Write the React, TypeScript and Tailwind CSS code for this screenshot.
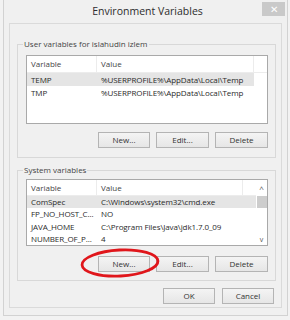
import React from "react";

type Row = { name: string; value: string; selected?: boolean };

const userVars: Row[] = [
  { name: "TEMP", value: "%USERPROFILE%\\AppData\\Local\\Temp", selected: true },
  { name: "TMP", value: "%USERPROFILE%\\AppData\\Local\\Temp" },
];

const systemVars: Row[] = [
  { name: "ComSpec", value: "C:\\Windows\\system32\\cmd.exe", selected: true },
  { name: "FP_NO_HOST_C...", value: "NO" },
  { name: "JAVA_HOME", value: "C:\\Program Files\\Java\\jdk1.7.0_09" },
  { name: "NUMBER_OF_P...", value: "4" },
];

function Button({ label, width }: { label: string; width: string }) {
  return (
    <div
      className={`${width} h-[16px] flex items-center justify-center border border-[#b4b4b4] bg-gradient-to-b from-[#f4f4f4] to-[#e6e6e6] text-[8px] text-[#333]`}
    >
      {label}
    </div>
  );
}

function VarList({ rows, scroll, height }: { rows: Row[]; scroll?: boolean; height: string }) {
  return (
    <div className={`ml-[8px] w-[242px] ${height} border border-[#a9a9a9] bg-white flex overflow-hidden`}>
      <div className="flex-1 flex flex-col">
        <div className="h-[17px] flex items-center border-b border-[#ececec] text-[8px] text-[#444]">
          <div className="w-[70px] h-full flex items-center pl-[4px] border-r border-[#ececec]">Variable</div>
          <div className="flex-1 h-full flex items-center pl-[4px] border-r border-[#ececec]">Value</div>
          <div className="w-[13px]" />
        </div>
        {rows.map((r) => (
          <div
            key={r.name}
            className={`h-[13px] flex items-center text-[8px] tracking-[-0.1px] text-[#2a2a2a] ${r.selected ? "bg-[#e5e5e5]" : ""} ${scroll ? "" : "mr-[13px]"}`}
          >
            <div className="w-[70px] pl-[4px] whitespace-nowrap">{r.name}</div>
            <div className="flex-1 pl-[4px] whitespace-nowrap">{r.value}</div>
          </div>
        ))}
      </div>
      {scroll && (
        <div className="w-[11px] flex flex-col items-center bg-white">
          <div className="h-[13px] mt-[2px] flex items-center justify-center text-[8px] text-[#555] leading-none">^</div>
          <div className="w-[10px] h-[12px] mt-[1px] bg-[#cdcdcd]" />
          <div className="flex-1" />
          <div className="h-[12px] flex items-center justify-center text-[7px] text-[#555] leading-none">v</div>
        </div>
      )}
    </div>
  );
}

export default function App() {
  return (
    <div
      className="relative w-[290px] h-[320px] bg-[#f2f2f2] overflow-hidden"
      style={{ fontFamily: '"Open Sans", "Noto Sans", sans-serif' }}
    >
      <div className="ml-[3px] w-[285px] h-[316px] border-x border-b border-[#d2d2d2] bg-[#f0f0f0] flex flex-col">
        {/* title bar */}
        <div className="relative h-[23px] flex items-center justify-center">
          <span className="text-[10.5px] text-[#2d2d2d] pl-[4px]">Environment Variables</span>
          <div className="absolute right-[2px] top-[2px] w-[23px] h-[14px] bg-[#c9c9c9] flex items-center justify-center text-white text-[10px] leading-none">
            ✕
          </div>
        </div>

        {/* client area */}
        <div className="mx-[5px] h-[285px] border border-[#dadada] bg-[#f0f0f0] flex flex-col">
          <fieldset className="ml-[7px] mt-[15px] w-[259px] border border-[#d8d8d8] pt-[6px] pb-[9px]">
            <legend className="ml-[5px] px-[1px] text-[8px] text-[#444] leading-[10px]">User variables for islahudin izlem</legend>
            <VarList rows={userVars} height="h-[69px]" />
            <div className="ml-[8px] w-[242px] mt-[8px] flex justify-end gap-[6px]">
              <Button label="New..." width="w-[52px]" />
              <Button label="Edit..." width="w-[53px]" />
              <Button label="Delete" width="w-[53px]" />
            </div>
          </fieldset>

          <fieldset className="ml-[7px] mt-[7px] w-[259px] border border-[#d8d8d8] pt-[4px] pb-[8px]">
            <legend className="ml-[5px] px-[1px] text-[8px] text-[#444] leading-[10px]">System variables</legend>
            <VarList rows={systemVars} scroll height="h-[67px]" />
            <div className="ml-[8px] w-[242px] mt-[10px] flex justify-end gap-[6px]">
              <Button label="New..." width="w-[52px]" />
              <Button label="Edit..." width="w-[53px]" />
              <Button label="Delete" width="w-[53px]" />
            </div>
          </fieldset>

          <div className="mt-[7px] mr-[7px] flex justify-end gap-[7px]">
            <Button label="OK" width="w-[52px]" />
            <Button label="Cancel" width="w-[52px]" />
          </div>
        </div>
      </div>

      {/* red annotation ellipse */}
      <svg className="absolute left-[78px] top-[245px]" width="84" height="36" viewBox="0 0 84 36">
        <ellipse cx="42" cy="18" rx="38" ry="13" fill="none" stroke="#e0161b" strokeWidth="2.8" transform="rotate(-3 42 18)" />
      </svg>
    </div>
  );
}
